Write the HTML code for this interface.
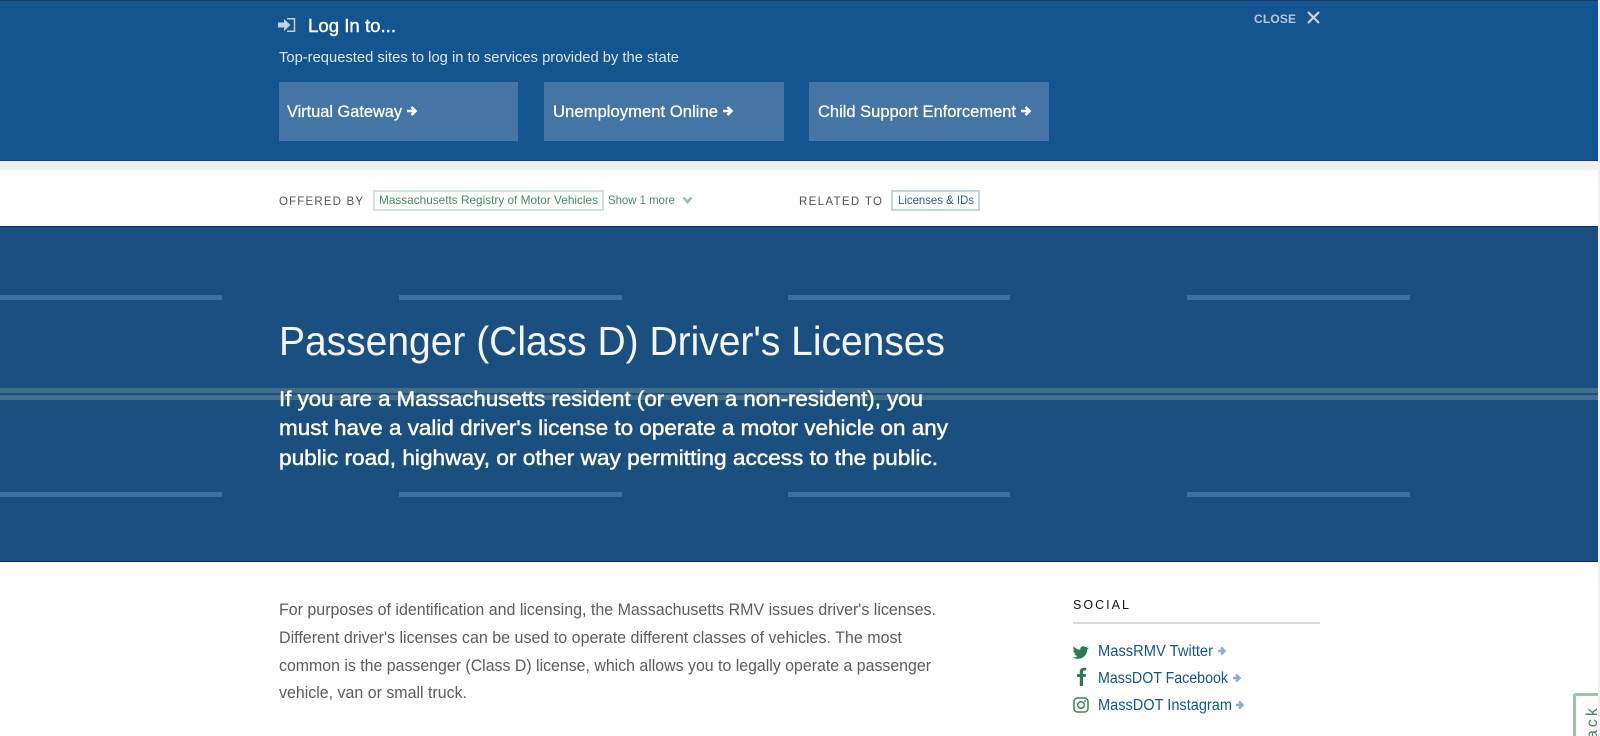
<!DOCTYPE html>
<html lang="en"><head><meta charset="utf-8"><title>Passenger (Class D) Driver's Licenses</title>
<style>
html,body{margin:0;padding:0;background:#fff}
body{width:1600px;height:736px;overflow:hidden;position:relative}
.a{position:absolute;display:block}
svg{position:absolute;left:0;top:0}
text{font-family:"Liberation Sans",sans-serif}
</style></head><body>
<div class="a" style="left:0;top:0;width:1598px;height:161px;background:#14558f;border-top:1px solid #1d3a5c;box-sizing:border-box;border-bottom:1px solid #0d3f85"></div>
<div class="a" style="left:0;top:161px;width:1598px;height:9px;background:#f0f0f0"></div>
<div class="a" style="left:0;top:226px;width:1598px;height:336px;background:#1a4f80;border-top:1px solid #0b2f6e;border-bottom:1px solid #0b2f6e;box-sizing:border-box"></div>
<div class="a" style="left:1598px;top:0;width:2px;height:736px;background:#f0f0f0"></div>
<div class="a" style="left:279px;top:82px;width:239px;height:59px;background:#4475a5"></div>
<div class="a" style="left:544px;top:82px;width:240px;height:59px;background:#4475a5"></div>
<div class="a" style="left:809px;top:82px;width:240px;height:59px;background:#4475a5"></div>
<div class="a" style="left:0;top:295px;width:222px;height:5px;background:#3f6f9e"></div>
<div class="a" style="left:399px;top:295px;width:223px;height:5px;background:#3f6f9e"></div>
<div class="a" style="left:788px;top:295px;width:222px;height:5px;background:#3f6f9e"></div>
<div class="a" style="left:1187px;top:295px;width:223px;height:5px;background:#3f6f9e"></div>
<div class="a" style="left:0;top:492px;width:222px;height:5px;background:#3f6f9e"></div>
<div class="a" style="left:399px;top:492px;width:223px;height:5px;background:#3f6f9e"></div>
<div class="a" style="left:788px;top:492px;width:222px;height:5px;background:#3f6f9e"></div>
<div class="a" style="left:1187px;top:492px;width:223px;height:5px;background:#3f6f9e"></div>
<div class="a" style="left:0;top:388px;width:1598px;height:5px;background:#426f88"></div>
<div class="a" style="left:0;top:395px;width:1598px;height:5px;background:#426f88"></div>
<div class="a" style="left:373px;top:190px;width:231px;height:21px;border:2px solid #d2e2da;box-sizing:border-box"></div>
<div class="a" style="left:891px;top:190px;width:89px;height:21px;border:2px solid #c5d4e5;box-sizing:border-box"></div>
<div class="a" style="left:1073px;top:622px;width:247px;height:2px;background:#d9d9d9"></div>
<div class="a" style="left:1573px;top:693px;width:25px;height:43px;border:3px solid #9cc4ad;border-right:0;border-bottom:0;border-top-left-radius:3px;box-sizing:border-box;overflow:hidden"></div>
<svg width="1600" height="736" viewBox="0 0 1600 736">
<!-- login icon -->
<path d="M287 18.800h7.500v12.400h-7.500" fill="none" stroke="#c3d2e2" stroke-width="1.500"/>
<path d="M278 22.500h6v-3.500l6.500 6-6.500 6v-3.500h-6z" fill="#c3d2e2"/>
<text x="308" y="32" font-size="18.500" fill="#fff" stroke="#fff" stroke-width=".4" textLength="88" lengthAdjust="spacingAndGlyphs">Log In to...</text>
<text x="279" y="62" font-size="15" fill="#dfe7f0" textLength="400" lengthAdjust="spacingAndGlyphs">Top-requested sites to log in to services provided by the state</text>
<g font-size="16.500" fill="#fff" stroke="#fff" stroke-width=".25">
<text x="287" y="117" textLength="115" lengthAdjust="spacingAndGlyphs">Virtual Gateway</text>
<text x="553" y="117" textLength="165" lengthAdjust="spacingAndGlyphs">Unemployment Online</text>
<text x="818" y="117" textLength="198" lengthAdjust="spacingAndGlyphs">Child Support Enforcement</text>
</g>
<g fill="none" stroke="#fff" stroke-width="2.600">
<path d="M407 111h8M411.500 107l4 4-4 4"/><path d="M723 111h8M727.500 107l4 4-4 4"/><path d="M1021 111h8M1025.500 107l4 4-4 4"/>
</g>
<text x="1254" y="23" font-size="12" font-weight="bold" fill="#b6c8da" textLength="42" lengthAdjust="spacing">CLOSE</text>
<path d="M1308 12l11 11M1319 12l-11 11" stroke="#c9d6e4" stroke-width="2.200" fill="none"/>
<text x="279" y="205" font-size="11.500" fill="#535353" textLength="84" lengthAdjust="spacing">OFFERED BY</text>
<text x="379" y="204" font-size="12" fill="#4a8a66" textLength="219" lengthAdjust="spacingAndGlyphs">Massachusetts Registry of Motor Vehicles</text>
<text x="608" y="204" font-size="12" fill="#4a8a66" textLength="67" lengthAdjust="spacingAndGlyphs">Show 1 more</text>
<path d="M683.500 197.500l4 4.500 4-4.500" fill="none" stroke="#9cc0ab" stroke-width="2.600"/>
<text x="799" y="205" font-size="11.500" fill="#535353" textLength="83" lengthAdjust="spacing">RELATED TO</text>
<text x="898" y="204" font-size="12" fill="#2a5f92" textLength="76" lengthAdjust="spacingAndGlyphs">Licenses &amp; IDs</text>
<text x="279" y="355" font-size="41" fill="#f2f5f9" textLength="666" lengthAdjust="spacingAndGlyphs">Passenger (Class D) Driver's Licenses</text>
<g font-size="21" fill="#fff" stroke="#fff" stroke-width=".45">
<text x="279" y="406" textLength="644" lengthAdjust="spacingAndGlyphs">If you are a Massachusetts resident (or even a non-resident), you</text>
<text x="279" y="435" textLength="669" lengthAdjust="spacingAndGlyphs">must have a valid driver's license to operate a motor vehicle on any</text>
<text x="279" y="465" textLength="659" lengthAdjust="spacingAndGlyphs">public road, highway, or other way permitting access to the public.</text>
</g>
<g font-size="16.500" fill="#5c5c5c">
<text x="279" y="615" textLength="657" lengthAdjust="spacingAndGlyphs">For purposes of identification and licensing, the Massachusetts RMV issues driver's licenses.</text>
<text x="279" y="643" textLength="623" lengthAdjust="spacingAndGlyphs">Different driver's licenses can be used to operate different classes of vehicles. The most</text>
<text x="279" y="671" textLength="652" lengthAdjust="spacingAndGlyphs">common is the passenger (Class D) license, which allows you to legally operate a passenger</text>
<text x="279" y="698" textLength="188" lengthAdjust="spacingAndGlyphs">vehicle, van or small truck.</text>
</g>
<text x="1073" y="609" font-size="12.500" fill="#141414" textLength="56" lengthAdjust="spacing">SOCIAL</text>
<g font-size="15.500" fill="#14558f">
<text x="1098" y="656" textLength="115" lengthAdjust="spacingAndGlyphs">MassRMV Twitter</text>
<text x="1098" y="683" textLength="130" lengthAdjust="spacingAndGlyphs">MassDOT Facebook</text>
<text x="1098" y="710" textLength="134" lengthAdjust="spacingAndGlyphs">MassDOT Instagram</text>
</g>
<g fill="none" stroke="#8eaccb" stroke-width="2.500">
<path d="M1218 651h6M1221 647.500l3.500 3.500-3.500 3.500"/><path d="M1233 678h6M1236 674.500l3.500 3.500-3.500 3.500"/><path d="M1236 705h6M1239 701.500l3.500 3.500-3.500 3.500"/>
</g>
<!-- twitter -->
<path d="M1088 647.500c-.6.3-1.200.4-1.900.5.700-.4 1.200-1 1.400-1.800-.6.4-1.300.7-2.100.8-1.400-1.500-4.400-.8-5 1.100-.2.600-.1 1.100 0 1.700-2.600-.1-5-1.400-6.600-3.400-.9 1.500-.4 3.400 1 4.400-.5 0-1-.2-1.500-.4 0 1.600 1.100 2.900 2.700 3.300-.5.100-1 .1-1.500 0 .4 1.300 1.600 2.200 3.100 2.300-1.400 1.100-3.200 1.600-5 1.400 4.300 2.700 10.300 1.600 13-2.600 1-1.500 1.500-3.300 1.400-5.100.7-.5 1.200-1 1.700-1.700z" fill="#2b7a52"/>
<!-- facebook -->
<path d="M1083 686v-9h2.700l.4-3H1083v-2c0-.9.300-1.500 1.500-1.500h1.700v-2.700c-.3 0-1.300-.1-2.400-.1-2.400 0-4 1.400-4 4.100v2.200h-2.700v3h2.700v9z" fill="#2b7a52"/>
<!-- instagram -->
<rect x="1074" y="698" width="14" height="14" rx="3.500" fill="none" stroke="#388557" stroke-width="1.500"/>
<circle cx="1081" cy="705" r="3.300" fill="none" stroke="#388557" stroke-width="1.500"/>
<circle cx="1085" cy="701" r=".9" fill="#388557"/>
<!-- feedback -->
<g clip-path="url(#c)"><text transform="translate(1597,739) rotate(-90)" x="0" y="0" font-size="16" letter-spacing="3" fill="#388557">ack</text></g>
<defs><clipPath id="c"><rect x="1576" y="696" width="22" height="40"/></clipPath></defs>
</svg>
</body></html>
